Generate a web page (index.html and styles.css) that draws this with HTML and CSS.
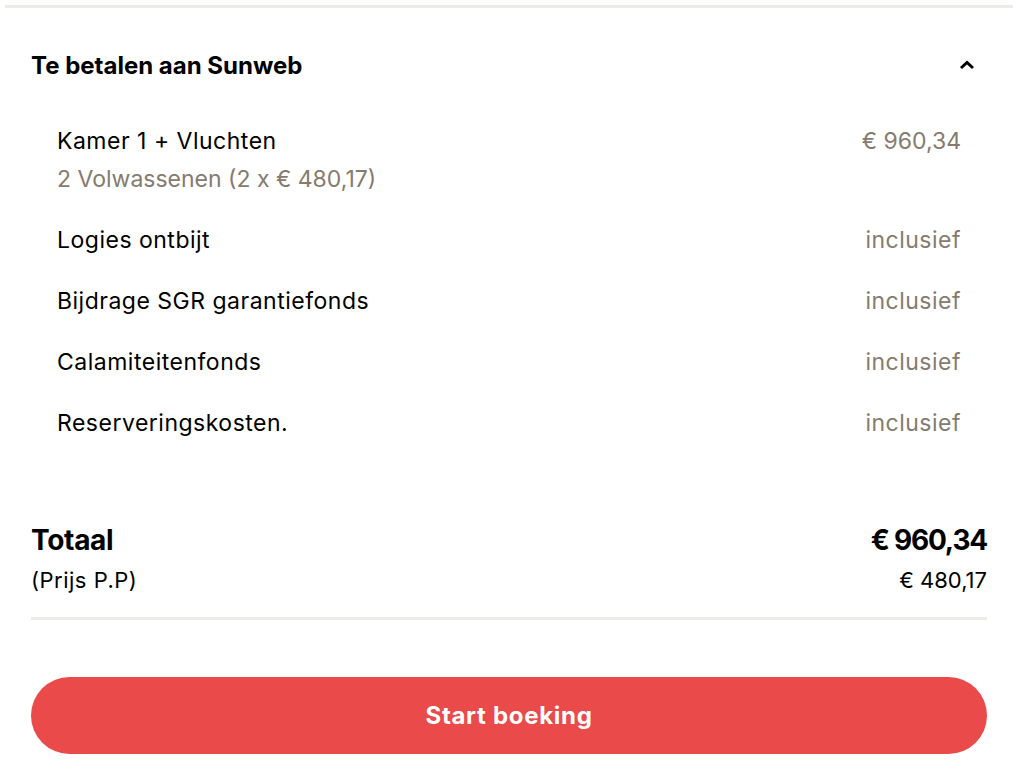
FILE: index.html
```html
<!DOCTYPE html>
<html lang="nl">
<head>
    <meta charset="UTF-8">
    <meta name="viewport" content="width=device-width, initial-scale=1.0">
    <title>Te betalen aan Sunweb</title>
    <link rel="stylesheet" href="styles.css">
</head>
<body>
    <div class="summary">
        <!-- Collapsible header -->
        <div class="summary-header">
            <h2>Te betalen aan Sunweb</h2>
            <svg class="chevron" width="16" height="10" viewBox="0 0 16 10">
                <path d="M2 8 L8 2.5 L14 8" fill="none" stroke="#000" stroke-width="3"/>
            </svg>
        </div>

        <!-- Price lines -->
        <ul class="lines">
            <li class="line">
                <div>
                    <div class="line-label">Kamer 1 + Vluchten</div>
                    <div class="line-sub">2 Volwassenen (2 x € 480,17)</div>
                </div>
                <div class="line-value price">€ 960,34</div>
            </li>
            <li class="line">
                <div class="line-label">Logies ontbijt</div>
                <div class="line-value">inclusief</div>
            </li>
            <li class="line">
                <div class="line-label">Bijdrage SGR garantiefonds</div>
                <div class="line-value">inclusief</div>
            </li>
            <li class="line">
                <div class="line-label">Calamiteitenfonds</div>
                <div class="line-value">inclusief</div>
            </li>
            <li class="line">
                <div class="line-label">Reserveringskosten.</div>
                <div class="line-value">inclusief</div>
            </li>
        </ul>

        <!-- Total -->
        <div class="total">
            <div class="total-row">
                <span class="total-label">Totaal</span>
                <span class="total-value">€ 960,34</span>
            </div>
            <div class="total-row pp">
                <span>(Prijs P.P)</span>
                <span class="price">€ 480,17</span>
            </div>
        </div>

        <button type="button" class="cta">Start boeking</button>
    </div>
</body>
</html>
```

FILE: styles.css
```css
/* Theme Colors */
:root {
    --red: #eb4a4a;
    --taupe: #857b6e;
    --line: #ebebe8;
    --black: #000;
}

body {
    margin: 0;
    padding: 5px 21px 0 5px;
    font-family: Inter, "Noto Sans", sans-serif;
    color: var(--black);
    background: #fff;
}

.summary {
    border-top: 3px solid var(--line);
    padding: 0 26px 0 26px;
}

/* Header */
.summary-header {
    display: flex;
    justify-content: space-between;
    align-items: center;
    height: 114px;
}

.summary-header h2 {
    margin: 0;
    font-size: 24px;
    font-weight: 700;
    letter-spacing: 0;
}

.chevron {
    margin-right: 12px;
}

/* Lines */
.lines {
    list-style: none;
    margin: 0;
    padding: 0 26px;
}

.line {
    display: flex;
    justify-content: space-between;
    align-items: flex-start;
    font-size: 23px;
    line-height: 38px;
    letter-spacing: 0.5px;
    margin-bottom: 23px;
}

.line-sub,
.line-value {
    color: var(--taupe);
}

.line-sub,
.price {
    letter-spacing: 0;
}

/* Total */
.total {
    margin-top: 75px;
    padding-bottom: 20px;
    border-bottom: 3px solid var(--line);
}

.total-row {
    display: flex;
    justify-content: space-between;
    align-items: baseline;
}

.total-label,
.total-value {
    font-size: 28px;
    font-weight: 700;
    line-height: 46px;
    letter-spacing: -0.3px;
}

.total-value {
    letter-spacing: -1.2px;
}

.pp {
    font-size: 22px;
    line-height: 34px;
    letter-spacing: 0.5px;
}

/* Button */
.cta {
    display: block;
    width: 100%;
    margin-top: 57px;
    height: 77px;
    border: none;
    border-radius: 40px;
    background: var(--red);
    color: #fff;
    font-family: Inter, "Noto Sans", sans-serif;
    font-size: 24px;
    font-weight: 700;
    letter-spacing: 0.7px;
    cursor: pointer;
}
```
